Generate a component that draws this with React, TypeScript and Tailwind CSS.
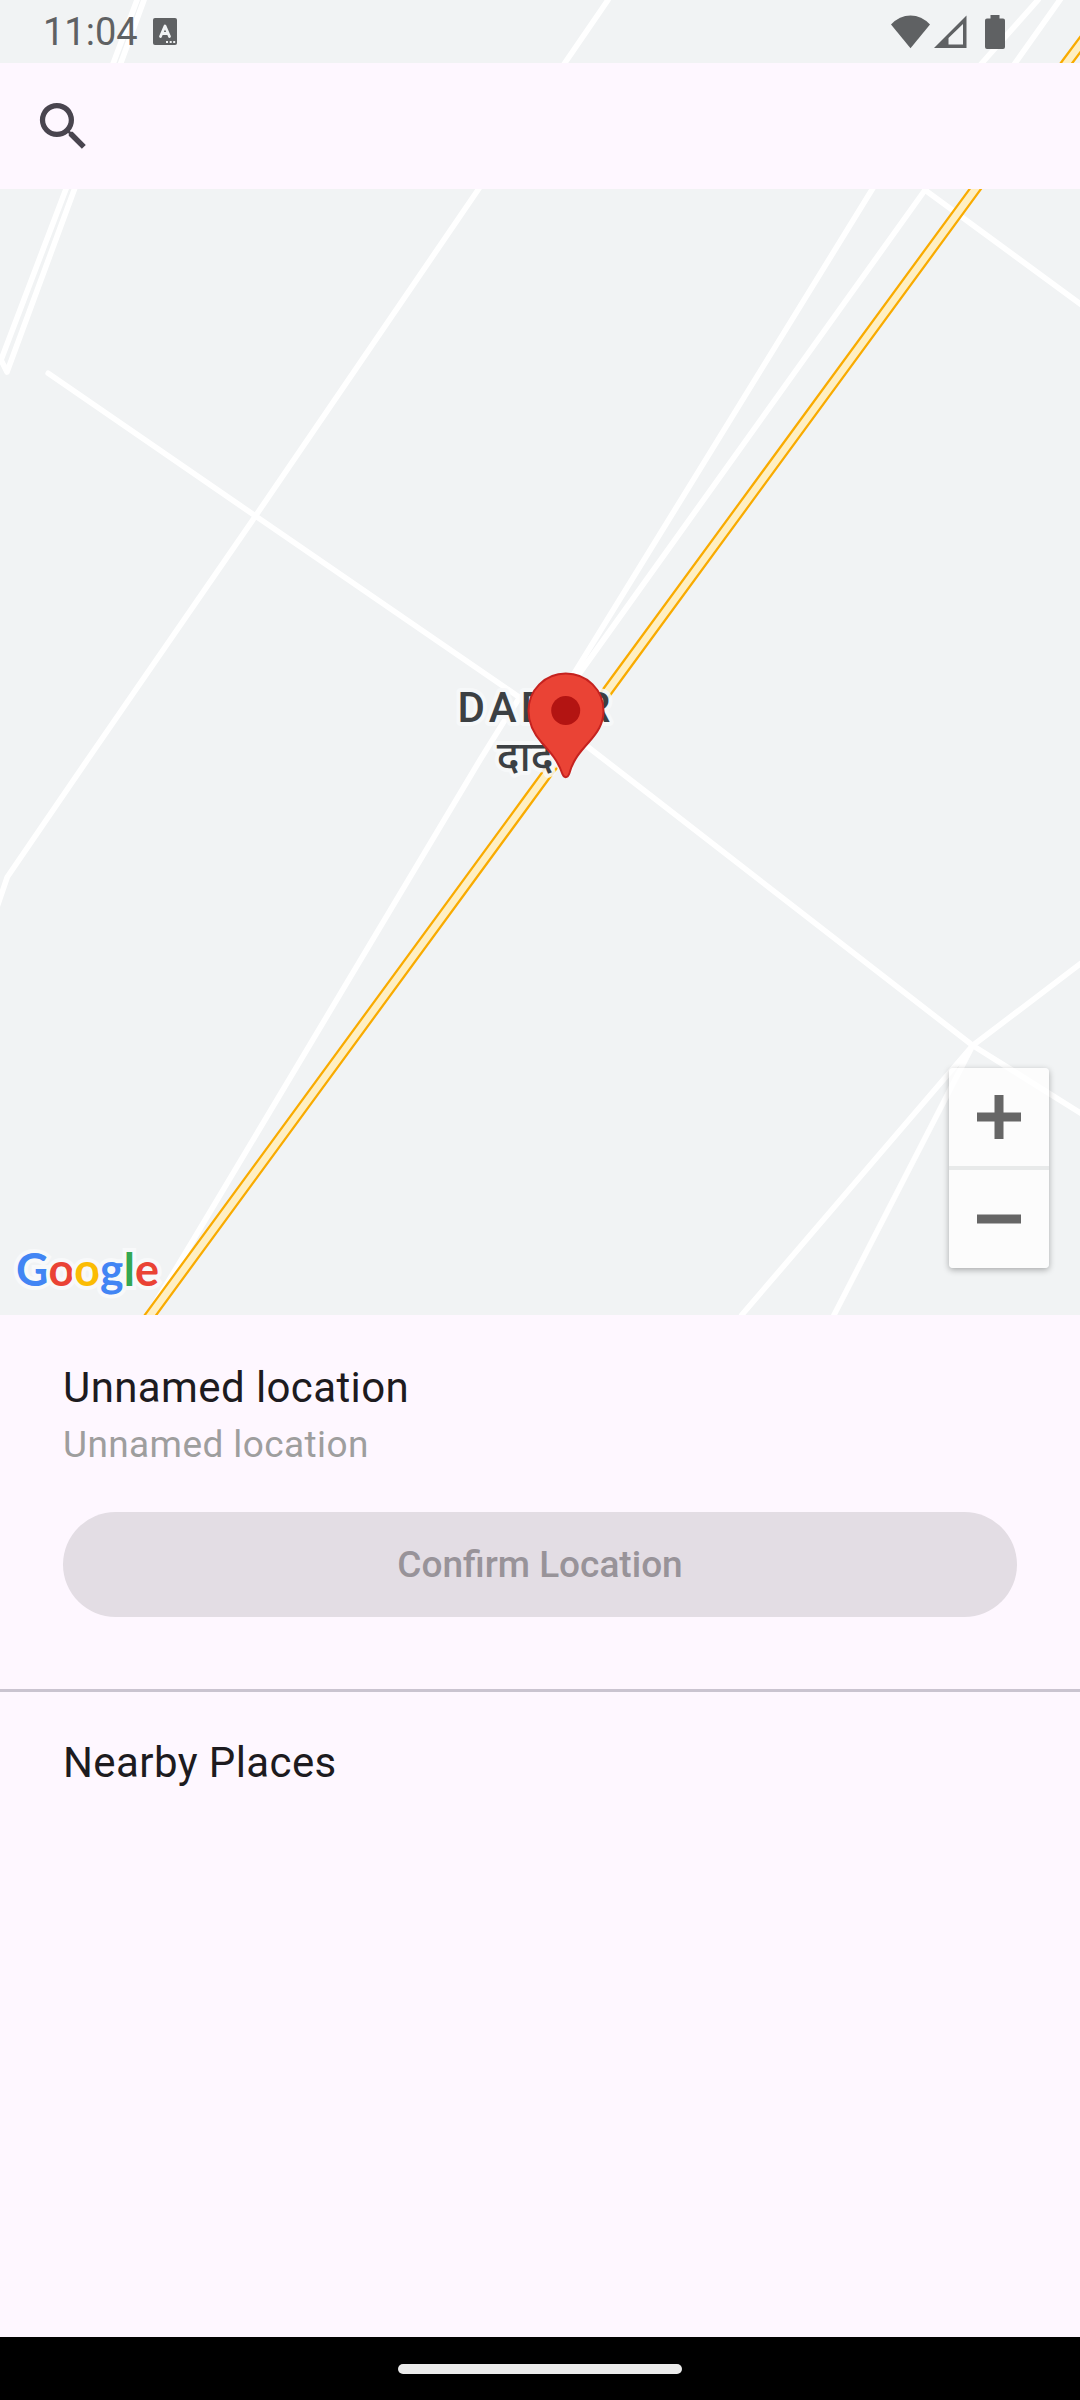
import { MdSearch } from "react-icons/md";

const MINOR_ROADS = [
  "M137 0 L66 189 L1 360 L7 372 L74.500 189 L144 0",
  "M608 0 L478.600 189 L255.500 516 L87.300 760 L7.300 877 L-4 910",
  "M48.200 373.300 L255.500 516 L516 695 L588 747 L650 795 L972.700 1045.500 L1090 1119",
  "M1090 956.500 L972.700 1045.500 L741.700 1315",
  "M972.700 1045.500 L834 1315",
  "M1038 0 L982 63 L873 188 L575 672 L558 702",
  "M1062 -3 L925 190 L580.500 672 L558 702",
  "M925 190 L1090 311",
  "M520 697 L503 723 L480 760 L192 1242 L148 1315",
];

const HIGHWAY = "M1120 -9 L1066.500 63 L975.300 189 L615.500 680 L527.700 800 L143.200 1325";

function MapCanvas() {
  return (
    <svg
      className="absolute inset-0 h-full w-full"
      viewBox="0 0 1080 1315"
      preserveAspectRatio="xMidYMid slice"
      role="img"
      aria-label="Map centred on Dadar"
    >
      <rect x="-1000" width="3080" height="1315" fill="#f1f3f4" />
      <g fill="none" stroke="#ffffff" strokeWidth="5.6" strokeLinecap="round" strokeLinejoin="round">
        {MINOR_ROADS.map((d) => (
          <path key={d} d={d} />
        ))}
      </g>
      <path d={HIGHWAY} fill="none" stroke="#f9ab00" strokeWidth="11.500" />
      <path d={HIGHWAY} fill="none" stroke="#feefc3" strokeWidth="7" />

      <g
        fill="#3c4043"
        stroke="#f8f9fa"
        strokeOpacity="0.85"
        strokeWidth="8"
        strokeLinejoin="round"
        paintOrder="stroke"
        textAnchor="middle"
      >
        <text x="536" y="722" className="font-['Roboto',sans-serif] text-[42px] font-medium tracking-widest">
          DADAR
        </text>
        <text x="534" y="771" className="font-['Noto_Sans','Noto_Sans_Devanagari',sans-serif] text-[42px] font-medium">
          दादर
        </text>
      </g>

      <path
        d="M565.700 673.500 C545 673.500 528.500 690 528.500 711 C528.500 724 534 734 542 743 C551 753 558 761 562 773 C563 776 564 777.200 565.700 777.200 C567.500 777.200 568.500 776 569.500 773 C573 760 580 752 589 742 C597 733 603.500 724 603.500 711 C603.500 690 587 673.500 565.700 673.500 Z"
        fill="#ea4335"
        stroke="#c5221f"
        strokeWidth="2"
      />
      <circle cx="565.700" cy="710.500" r="14.500" fill="#b31412" />
    </svg>
  );
}

function StatusBar() {
  return (
    <div className="relative flex h-[63px] items-center justify-between pr-[75px] pl-[43px] text-[#5f6163]">
      <div className="flex items-center gap-[15px]">
        <span className="text-[38px] leading-none">11:04</span>
        <svg className="h-[27px] w-6" viewBox="0 0 24 27" aria-hidden="true">
          <rect width="24" height="27" rx="2" fill="currentColor" />
          <path d="M7.500 18.500 L12 8 L16.500 18.500 M9 15.500 H15" fill="none" stroke="#f1f3f4" strokeWidth="2.800" strokeLinecap="round" strokeLinejoin="round" />
          <path d="M13 23 h2 v2 h-2 z M16.700 23 h2 v2 h-2 z M20.200 23 h2 v2 h-2 z" fill="#f1f3f4" />
        </svg>
      </div>
      <div className="flex items-center">
        <svg className="h-[34px] w-[39px]" viewBox="0 0 39 34" aria-label="Wi-Fi">
          <path d="M0 9.500 Q8.500 0.500 19.500 0.500 Q30.500 0.500 39 9.500 L19.500 33.300 Z" fill="currentColor" />
        </svg>
        <svg className="ml-1 h-[34px] w-[33px]" viewBox="0 0 33 34" aria-label="Mobile signal">
          <path d="M0 33 L32.500 0.500 V33 Z M14.500 29.500 H29 V9 L14.500 23 Z" fill="currentColor" fillRule="evenodd" />
        </svg>
        <svg className="ml-[18px] h-[34px] w-5" viewBox="0 0 20 34" aria-label="Battery">
          <path d="M5.500 0 H14.500 V3.500 H18 Q20 3.500 20 5.500 V32 Q20 34 18 34 H2 Q0 34 0 32 V5.500 Q0 3.500 2 3.500 H5.500 Z" fill="currentColor" />
        </svg>
      </div>
    </div>
  );
}

function SearchBar() {
  return (
    <form className="relative flex h-[126px] items-center bg-[#fef7ff] px-8">
      <button type="button" aria-label="Search" className="shrink-0 text-[#49454f]">
        <MdSearch className="size-[63px]" />
      </button>
      <input
        type="search"
        aria-label="Search for a place"
        className="h-full min-w-0 flex-1 bg-transparent px-4 text-[42px] text-[#1d1b20] outline-none"
      />
    </form>
  );
}

function ZoomControls() {
  return (
    <div className="absolute right-[31px] bottom-[47px] flex w-[100px] flex-col rounded-sm bg-white/75 shadow-[0_2px_6px_rgba(0,0,0,0.3)]">
      <button type="button" aria-label="Zoom in" className="flex h-[98px] items-center justify-center">
        <svg className="size-11" viewBox="0 0 44 44">
          <path d="M0 22 H44 M22 0 V44" stroke="#666666" strokeWidth="9" />
        </svg>
      </button>
      <div className="h-1 bg-[#e8eaea]" />
      <button type="button" aria-label="Zoom out" className="flex h-[98px] items-center justify-center">
        <svg className="size-11" viewBox="0 0 44 44">
          <path d="M0 22 H44" stroke="#666666" strokeWidth="9" />
        </svg>
      </button>
    </div>
  );
}

function GoogleLogo() {
  return (
    <a
      href="#google"
      aria-label="Google"
      className="absolute bottom-[23px] left-4 font-['Lato',sans-serif] text-[45px] leading-none font-bold [-webkit-text-stroke:8px_#f8f9fa] [paint-order:stroke]"
    >
      <span className="text-[#4285f4]">G</span>
      <span className="text-[#ea4335]">o</span>
      <span className="text-[#fbbc04]">o</span>
      <span className="text-[#4285f4]">g</span>
      <span className="text-[#34a853]">l</span>
      <span className="text-[#ea4335]">e</span>
    </a>
  );
}

export default function App() {
  return (
    <div className="flex min-h-screen flex-col bg-[#fef7ff] font-['Roboto',sans-serif] text-[#1d1b20]">
      <header className="relative overflow-hidden">
        <MapCanvas />
        <StatusBar />
        <SearchBar />
        <div className="relative h-[1126px]">
          <GoogleLogo />
          <ZoomControls />
        </div>
      </header>

      <main className="flex-1 tracking-wide">
        <section className="px-[63px] pt-[41px] pb-[72px]">
          <h1 className="text-[42px] leading-[63px]">Unnamed location</h1>
          <p className="text-[37px] leading-[52px] text-[#9e9e9e]">Unnamed location</p>
          <button
            type="button"
            disabled
            className="mt-[41px] h-[105px] w-full rounded-full bg-[#e3dde4] text-[37px] font-medium tracking-normal text-[#989399]"
          >
            Confirm Location
          </button>
        </section>
        <hr className="h-[3px] border-0 bg-[#cac4d0]" />
        <section className="px-[63px] pt-[39px]">
          <h2 className="text-[42px] leading-[63px]">Nearby Places</h2>
        </section>
      </main>

      <footer className="flex h-[63px] items-center justify-center bg-black">
        <div className="h-[10px] w-[284px] rounded-full bg-[#ebebeb]" />
      </footer>
    </div>
  );
}
